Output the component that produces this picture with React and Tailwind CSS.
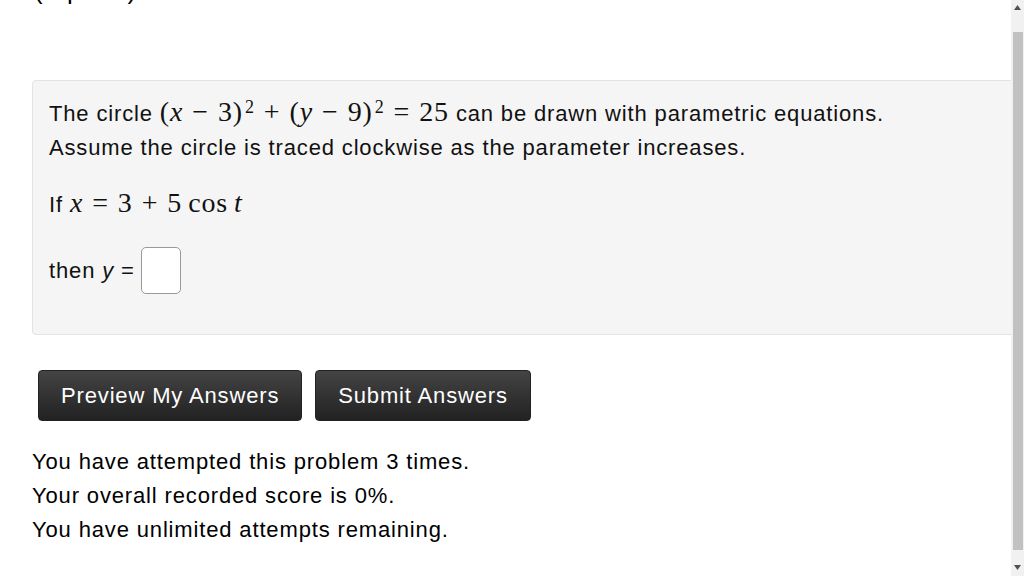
import React from "react";

const serif = "font-['Liberation_Serif','Times_New_Roman',serif]";

function V({ children }) {
  return <span className={`${serif} italic text-[28px] leading-none`}>{children}</span>;
}

function N({ children }) {
  return <span className={`${serif} text-[28px] leading-none`}>{children}</span>;
}

function Op({ children }) {
  return <span className={`${serif} text-[28px] leading-none mx-[9px]`}>{children}</span>;
}

function Sq() {
  return <sup className={`${serif} text-[18px] leading-none relative -top-[8px] ml-[2px]`}>2</sup>;
}

function Scrollbar() {
  return (
    <div className="w-[13px] shrink-0 bg-[#f1f1f1] flex flex-col items-center">
      <div className="h-[32px] flex items-start pt-[5px]">
        <svg width="7" height="5" viewBox="0 0 7 5">
          <path d="M0 5 L3.5 0 L7 5 Z" fill="#505050" />
        </svg>
      </div>
      <div className="w-[10px] flex-1 bg-[#c1c1c1]" />
      <div className="h-[26px] flex items-start pt-[15px]">
        <svg width="7" height="5" viewBox="0 0 7 5">
          <path d="M0 0 L3.5 5 L7 0 Z" fill="#505050" />
        </svg>
      </div>
    </div>
  );
}

export default function App() {
  return (
    <div className="h-[576px] w-[1024px] flex bg-white text-[#111] font-['Liberation_Sans',Arial,sans-serif] tracking-[0.85px] overflow-hidden">
      <div className="flex-1 overflow-hidden">
        <div className="pl-[34px] -mt-[25px] text-[26px] leading-[30px] text-black">(1 point)</div>

        <div className="ml-[32px] mt-[75px] w-[1000px] bg-[#f5f5f5] border border-[#e3e3e3] rounded-[4px] pl-[16px] pt-[16px] pb-[40px] text-[22px] leading-[34px]">
          <div>
            The circle{" "}
            <span className="whitespace-nowrap">
              <N>(</N>
              <V>x</V>
              <Op>−</Op>
              <N>3</N>
              <N>)</N>
              <Sq />
              <Op>+</Op>
              <N>(</N>
              <V>y</V>
              <Op>−</Op>
              <N>9</N>
              <N>)</N>
              <Sq />
              <Op>=</Op>
              <N>25</N>
            </span>{" "}
            can be drawn with parametric equations.
          </div>
          <div>Assume the circle is traced clockwise as the parameter increases.</div>

          <div className="mt-[23px]">
            If <V>x</V>
            <Op>=</Op>
            <N>3</N>
            <Op>+</Op>
            <N>5</N>
            <span className={`${serif} text-[28px] leading-none ml-[6px]`}>cos</span>
            <span className="ml-[6px]">
              <V>t</V>
            </span>
          </div>

          <div className="mt-[25px] flex items-center">
            <span>
              then <span className="italic">y</span> =
            </span>
            <div className="ml-[6px] w-[40px] h-[47px] bg-white border border-[#999] rounded-[5px]" />
          </div>
        </div>

        <div className="ml-[38px] mt-[35px] flex gap-[13px]">
          <button className="h-[51px] px-[22px] rounded-[4px] bg-gradient-to-b from-[#444] to-[#222] border border-[#222] text-white text-[22px] tracking-[0.85px]">
            Preview My Answers
          </button>
          <button className="h-[51px] px-[22px] rounded-[4px] bg-gradient-to-b from-[#444] to-[#222] border border-[#222] text-white text-[22px] tracking-[0.85px]">
            Submit Answers
          </button>
        </div>

        <div className="ml-[32px] mt-[24px] text-[22px] leading-[34px] text-black">
          <div>You have attempted this problem 3 times.</div>
          <div>Your overall recorded score is 0%.</div>
          <div>You have unlimited attempts remaining.</div>
        </div>
      </div>
      <Scrollbar />
    </div>
  );
}
